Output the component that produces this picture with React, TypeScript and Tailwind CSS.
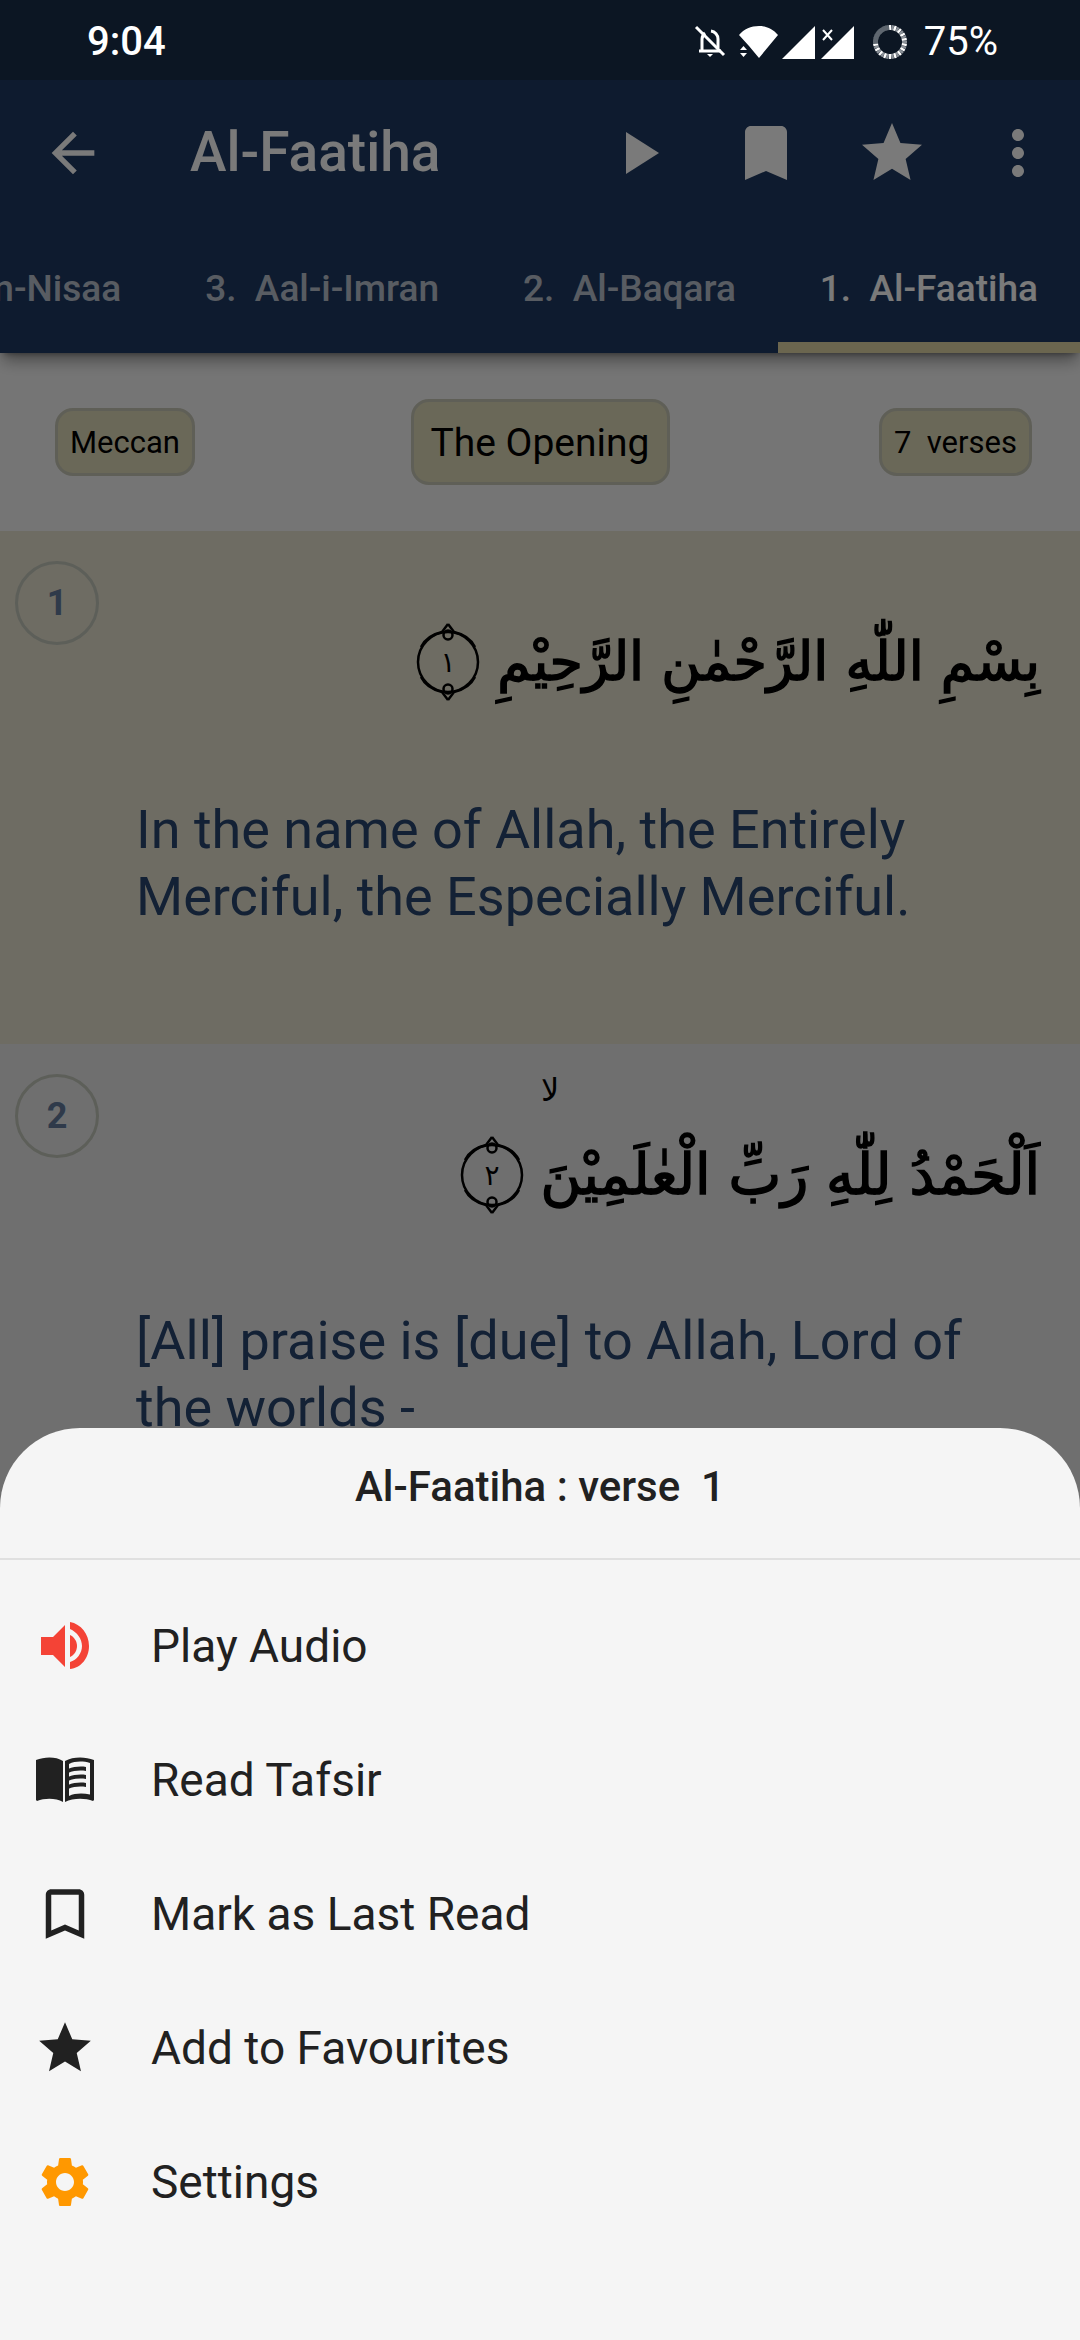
import { MdArrowBack, MdPlayArrow, MdBookmark, MdBookmarkBorder, MdStar, MdMoreVert, MdSettings } from "react-icons/md";

const tabs = ["4.  An-Nisaa", "3.  Aal-i-Imran", "2.  Al-Baqara", "1.  Al-Faatiha"];

function BatteryRing() {
    const ticks = Array.from({ length: 36 }, (_, i) => i);
    return (
        <svg width="36" height="36" viewBox="0 0 36 36">
            {ticks.map((i) => (
                <line
                    key={i}
                    x1="18"
                    y1="1"
                    x2="18"
                    y2="6"
                    transform={`rotate(${i * 10} 18 18)`}
                    stroke={i < 27 ? (i % 2 === 0 ? "#ffffff" : "#8b9198") : "#5f6770"}
                    strokeWidth={i < 27 ? 2.4 : 3.4}
                />
            ))}
        </svg>
    );
}

function StatusBar() {
    return (
        <div className="relative z-20 flex h-[80px] shrink-0 items-center bg-[#0c1623] pl-[87px] pr-[82px] pt-[4px] text-white">
            <span className="text-[40px] font-medium leading-none">9:04</span>
            <div className="ml-auto flex items-center">
                <svg width="32" height="36" viewBox="0 0 32 36" fill="none" stroke="#fff" strokeWidth="3">
                    <path d="M5 27h22M8 27V15a8 8 0 0 1 3-6M24 24v-9a8 8 0 0 0-7-8" />
                    <path d="M2 3l28 28" />
                    <path d="M13 30h6l-3 3z" fill="#fff" stroke="none" />
                </svg>
                <svg className="ml-[13px]" width="40" height="34" viewBox="0 0 40 34" fill="#fff">
                    <path d="M1 10C6 4 13 1 21 1s14 3 19 9L21 33 11 21z" transform="translate(-1 0)" />
                    <path d="M1 25l3.500-4 3.500 4zM1 28l3.500 4 3.500-4z" />
                </svg>
                <svg className="ml-[3px]" width="33" height="33" viewBox="0 0 33 33" fill="#fff">
                    <path d="M33 0v33H0z" />
                </svg>
                <svg className="ml-[6px]" width="33" height="33" viewBox="0 0 33 33" fill="#fff">
                    <path d="M33 0v33H0z" />
                    <path d="M2 4l9 10M11 4l-9 10" stroke="#fff" strokeWidth="2" />
                </svg>
                <div className="ml-[18px]">
                    <BatteryRing />
                </div>
                <span className="ml-[16px] text-[40px] leading-none">75%</span>
            </div>
        </div>
    );
}

function AppBar() {
    return (
        <div className="relative z-0 bg-[#1f3a62] shadow-lg shadow-black/40">
            <div className="flex h-[146px] items-center pr-[26px] text-white">
                <MdArrowBack className="ml-[41px] shrink-0" size={64} />
                <h1 className="mb-[2px] ml-[85px] text-[55px] font-medium">Al-Faatiha</h1>
                <div className="ml-auto flex items-center gap-[54px]">
                    <MdPlayArrow className="mr-[2px]" size={72} />
                    <MdBookmark size={72} />
                    <MdStar size={72} />
                    <MdMoreVert size={72} />
                </div>
            </div>
            <div className="flex h-[127px] justify-end overflow-hidden">
                {tabs.map((tab, i) => (
                    <div
                        key={tab}
                        className={
                            "flex h-full shrink-0 items-center whitespace-pre px-[42px] text-[37px] font-medium " +
                            (i === 3 ? "border-b-[11px] border-[#dfd5a5] pt-[9px] text-white" : "pb-[2px] text-white/70")
                        }
                    >
                        {tab}
                    </div>
                ))}
            </div>
        </div>
    );
}

function VerseMark({ digit }: { digit: string }) {
    return (
        <svg width="66" height="78" viewBox="0 0 66 78" fill="none" stroke="#000" className="shrink-0">
            <circle cx="33" cy="39" r="30" strokeWidth="2.500" />
            <path d="M33 1l6 8c9 2 17 7 21 15M33 1l-6 8C18 11 10 16 6 24" strokeWidth="2.500" />
            <path d="M33 77l6-8c9-2 17-7 21-15M33 77l-6-8C18 67 10 62 6 54" strokeWidth="2.500" />
            <circle cx="33" cy="12" r="4.500" strokeWidth="2.500" />
            <circle cx="33" cy="66" r="4.500" strokeWidth="2.500" />
            <text x="33" y="49" textAnchor="middle" fontSize="28" fill="#000" stroke="none" fontFamily="'DejaVu Sans', sans-serif">
                {digit}
            </text>
        </svg>
    );
}

function Verse({
    n,
    digit,
    arabic,
    english,
    highlighted,
    arabicSize,
    textTop,
    waqf,
}: {
    n: number;
    digit: string;
    arabic: string;
    english: string[];
    highlighted?: boolean;
    arabicSize: string;
    textTop: string;
    waqf?: boolean;
}) {
    return (
        <section className={"h-[513px] shrink-0 pl-[15px] pt-[30px] " + (highlighted ? "bg-[#e5e1cf]" : "bg-[#e8e8e8]")}>
            <div className="relative">
                <div className="flex h-[84px] w-[84px] items-center justify-center rounded-full border-[3px] border-[#c2c6bb] text-[36px] font-bold text-[#62799c]">
                    {n}
                </div>
                {waqf && (
                    <span dir="rtl" className="absolute left-[526px] top-[-8px] font-['DejaVu_Sans',sans-serif] text-[32px] text-black">
                        لا
                    </span>
                )}
            </div>
            <div className="-mt-[28px] flex items-center justify-end gap-[16px] pr-[40px]">
                <VerseMark digit={digit} />
                <p dir="rtl" className={"whitespace-nowrap font-['DejaVu_Sans',sans-serif] leading-[90px] text-black [-webkit-text-stroke:1.5px_black] " + arabicSize}>
                    {arabic}
                </p>
            </div>
            <div className={"pl-[121px] text-[54px] leading-[67px] text-[#28456f] " + textTop}>
                {english.map((line) => (
                    <p key={line} className="whitespace-nowrap">{line}</p>
                ))}
            </div>
        </section>
    );
}

function ChipRow() {
    return (
        <div className="flex h-[178px] shrink-0 items-center justify-between bg-[#f5f5f5] pl-[55px] pr-[48px]">
            <div className="flex h-[68px] w-[140px] items-center justify-center rounded-[18px] border-[3px] border-[#c6c6b6] bg-[#ddd9b8] pt-[2px] text-[31px] text-black">
                Meccan
            </div>
            <div className="ml-[6px] flex h-[86px] w-[259px] items-center justify-center rounded-[18px] border-[3px] border-[#c6c6b6] bg-[#ddd9b8] pt-[2px] text-[39px] text-black">
                The Opening
            </div>
            <div className="flex h-[68px] w-[153px] items-center justify-center whitespace-pre rounded-[18px] border-[3px] border-[#c6c6b6] bg-[#ddd9b8] pt-[2px] text-[31px] text-black">
                7  verses
            </div>
        </div>
    );
}

function SpeakerIcon() {
    return (
        <svg width="48" height="48" viewBox="0 0 48 48" fill="#f44336">
            <path d="M0 15h12L24 3v42L12 33H0z" />
            <path d="M29 0c11 2 19 12 19 24S40 46 29 47v-7c7-2 12-9 12-16S36 10 29 7z" />
            <path d="M29 13c4 2 7 6 7 11s-3 9-7 11z" />
        </svg>
    );
}

function BookIcon() {
    return (
        <svg width="58" height="46" viewBox="0 0 58 46" fill="#212121">
            <path d="M0 3c9-3.500 20-3.500 27 1v41c-7-4-18-4-26-1l-1-1z" />
            <path
                fillRule="evenodd"
                d="M29 4c8-4.500 20-4.500 29-1v40l-1 1c-8-3-20-3-28 1zM33 7v32c6-3 14-3 21-1.500V6c-7-2-15-2-21 1z"
            />
            <path d="M32 12c6-2.500 13-3 18-2v4c-6-1-12-.500-18 2zM32 20c6-2.500 13-3 18-2v4c-6-1-12-.500-18 2zM32 28c6-2.500 13-3 18-2v4c-6-1-12-.500-18 2z" />
        </svg>
    );
}

const menu = [
    { label: "Play Audio", icon: <SpeakerIcon /> },
    { label: "Read Tafsir", icon: <BookIcon /> },
    { label: "Mark as Last Read", icon: <MdBookmarkBorder size={66} color="#212121" /> },
    { label: "Add to Favourites", icon: <MdStar size={62} color="#212121" /> },
    { label: "Settings", icon: <MdSettings size={60} color="#ff9800" /> },
];

function BottomSheet() {
    return (
        <div className="absolute inset-x-0 bottom-0 z-30 h-[912px] rounded-t-[80px] bg-[#f5f5f5] text-[#212121]">
            <div className="h-[132px] border-b-2 border-[#e0e0e0] pt-[32px] text-center">
                <h2 className="whitespace-pre text-[42px] font-medium leading-[54px]">Al-Faatiha : verse  1</h2>
            </div>
            <ul className="pt-[19px]">
                {menu.map((item) => (
                    <li key={item.label} className="flex h-[134px] items-center">
                        <span className="flex w-[130px] shrink-0 items-center justify-center">{item.icon}</span>
                        <span className="ml-[21px] text-[46px]">{item.label}</span>
                    </li>
                ))}
            </ul>
        </div>
    );
}

export default function App() {
    return (
        <div className="relative flex h-[2340px] w-[1080px] flex-col overflow-hidden bg-[#f5f5f5] font-['Roboto',sans-serif]">
            <StatusBar />
            <main className="relative flex-1 overflow-hidden">
                <AppBar />
                <ChipRow />
                <Verse
                    n={1}
                    digit="١"
                    arabic="بِسْمِ اللّٰهِ الرَّحْمٰنِ الرَّحِيْمِ"
                    english={["In the name of Allah, the Entirely", "Merciful, the Especially Merciful."]}
                    highlighted
                    arabicSize="text-[54px]"
                    textTop="mt-[89px]"
                />
                <Verse
                    n={2}
                    digit="٢"
                    arabic="اَلْحَمْدُ لِلّٰهِ رَبِّ الْعٰلَمِيْنَ"
                    english={["[All] praise is [due] to Allah, Lord of", "the worlds -"]}
                    arabicSize="text-[56px]"
                    textTop="mt-[87px]"
                    waqf
                />
                <div className="absolute inset-0 z-10 bg-black/[0.52]" />
            </main>
            <BottomSheet />
        </div>
    );
}
